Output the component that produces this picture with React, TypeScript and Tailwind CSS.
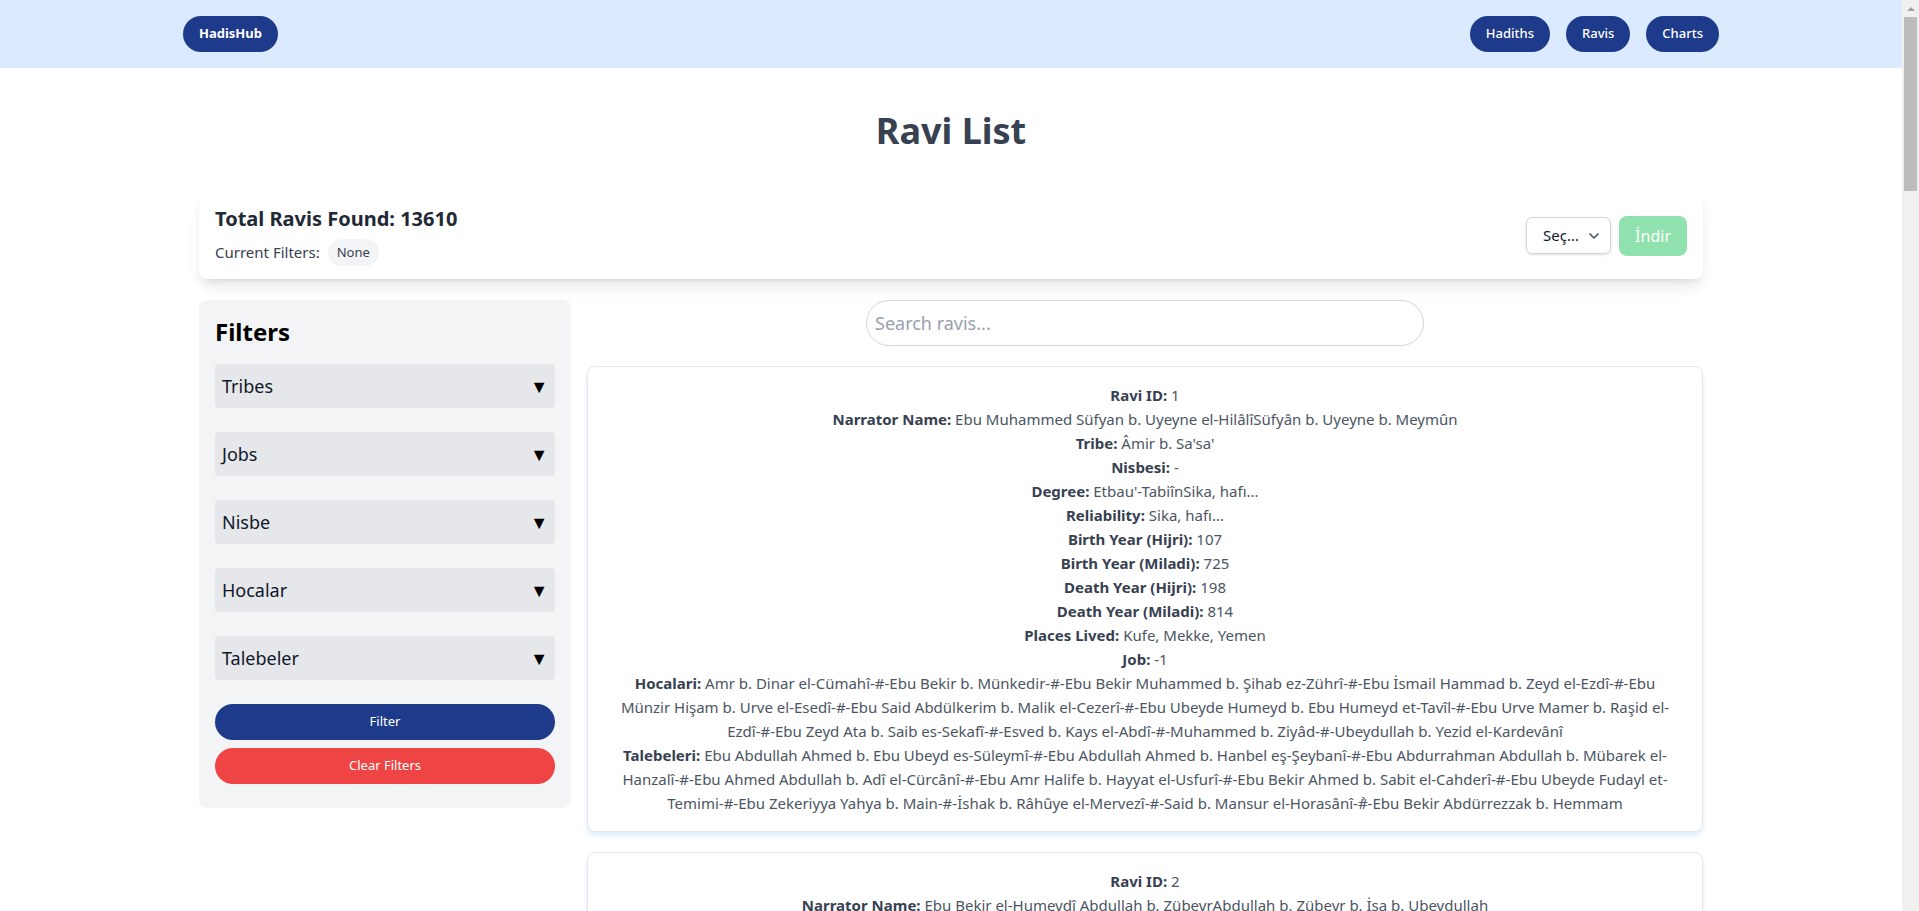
import React from 'react';
import { ChevronDown } from 'lucide-react';

interface Ravi {
  id: number;
  name: string;
  tribe: string;
  nisbesi: string;
  degree: string;
  reliability: string;
  birthHijri: string;
  birthMiladi: string;
  deathHijri: string;
  deathMiladi: string;
  places: string;
  job: string;
  hocalari: string;
  talebeleri: string;
}

const ravis: Ravi[] = [
  {
    id: 1,
    name: 'Ebu Muhammed Süfyan b. Uyeyne el-HilâlîSüfyân b. Uyeyne b. Meymûn',
    tribe: "Âmir b. Sa'sa'",
    nisbesi: '-',
    degree: "Etbau'-TabiînSika, hafı...",
    reliability: 'Sika, hafı...',
    birthHijri: '107',
    birthMiladi: '725',
    deathHijri: '198',
    deathMiladi: '814',
    places: 'Kufe, Mekke, Yemen',
    job: '-1',
    hocalari:
      'Amr b. Dinar el-Cümahî-#-Ebu Bekir b. Münkedir-#-Ebu Bekir Muhammed b. Şihab ez-Zührî-#-Ebu İsmail Hammad b. Zeyd el-Ezdî-#-Ebu Münzir Hişam b. Urve el-Esedî-#-Ebu Said Abdülkerim b. Malik el-Cezerî-#-Ebu Ubeyde Humeyd b. Ebu Humeyd et-Tavîl-#-Ebu Urve Mamer b. Raşid el-Ezdî-#-Ebu Zeyd Ata b. Saib es-Sekafî-#-Esved b. Kays el-Abdî-#-Muhammed b. Ziyâd-#-Ubeydullah b. Yezid el-Kardevânî',
    talebeleri:
      'Ebu Abdullah Ahmed b. Ebu Ubeyd es-Süleymî-#-Ebu Abdullah Ahmed b. Hanbel eş-Şeybanî-#-Ebu Abdurrahman Abdullah b. Mübarek el-Hanzalî-#-Ebu Ahmed Abdullah b. Adî el-Cürcânî-#-Ebu Amr Halife b. Hayyat el-Usfurî-#-Ebu Bekir Ahmed b. Sabit el-Cahderî-#-Ebu Ubeyde Fudayl et-Temimi-#-Ebu Zekeriyya Yahya b. Main-#-İshak b. Râhûye el-Mervezî-#-Said b. Mansur el-Horasânî-#̉-Ebu Bekir Abdürrezzak b. Hemmam',
  },
  {
    id: 2,
    name: 'Ebu Bekir el-Humeydî Abdullah b. ZübeyrAbdullah b. Zübeyr b. İsa b. Ubeydullah',
    tribe: 'Esed b. Abdüluzzâ',
    nisbesi: 'el-Humeydî',
    degree: 'Etbau Etbai-t-TabiînSika, hafız...',
    reliability: 'Sika, hafız...',
    birthHijri: '-',
    birthMiladi: '-',
    deathHijri: '219',
    deathMiladi: '834',
    places: 'Mekke',
    job: '-1',
    hocalari: 'Ebu Muhammed Süfyan b. Uyeyne el-Hilâlî-#-Ebu Abdullah Muhammed b. İdris eş-Şafiî',
    talebeleri: 'Ebu Abdullah Muhammed b. İsmail el-Buhârî-#-Ebu Hatim Muhammed b. İdris er-Râzî',
  },
];

const filterGroups = ['Tribes', 'Jobs', 'Nisbe', 'Hocalar', 'Talebeler'];

function Field({ label, value }: { label: string; value: string }) {
  return (
    <p>
      <span className="font-bold text-[#374151]">{label}:</span> {value}
    </p>
  );
}

function RaviCard({ ravi }: { ravi: Ravi }) {
  return (
    <div className="bg-white border border-gray-200 rounded-lg shadow-md shadow-blue-100 px-8 py-4 text-center text-[15px] leading-6 text-[#4b5563]">
      <Field label="Ravi ID" value={String(ravi.id)} />
      <Field label="Narrator Name" value={ravi.name} />
      <Field label="Tribe" value={ravi.tribe} />
      <Field label="Nisbesi" value={ravi.nisbesi} />
      <Field label="Degree" value={ravi.degree} />
      <Field label="Reliability" value={ravi.reliability} />
      <Field label="Birth Year (Hijri)" value={ravi.birthHijri} />
      <Field label="Birth Year (Miladi)" value={ravi.birthMiladi} />
      <Field label="Death Year (Hijri)" value={ravi.deathHijri} />
      <Field label="Death Year (Miladi)" value={ravi.deathMiladi} />
      <Field label="Places Lived" value={ravi.places} />
      <Field label="Job" value={ravi.job} />
      <Field label="Hocalari" value={ravi.hocalari} />
      <Field label="Talebeleri" value={ravi.talebeleri} />
    </div>
  );
}

export default function App() {
  const [search, setSearch] = React.useState('');

  return (
    <div className="min-h-screen bg-white pr-[17px] font-['Noto_Sans',sans-serif]">
      <header className="bg-[#dbeafe]">
        <nav className="mx-auto max-w-[1536px] h-[68px] flex items-center justify-between">
          <a className="h-9 px-4 flex items-center rounded-full bg-[#1e3a8a] text-white text-[13px] font-bold">
            HadisHub
          </a>
          <div className="flex items-center gap-4">
            {['Hadiths', 'Ravis', 'Charts'].map((item) => (
              <a
                key={item}
                className="h-9 px-4 flex items-center rounded-full bg-[#1e3a8a] text-white text-[13px] font-medium"
              >
                {item}
              </a>
            ))}
          </div>
        </nav>
      </header>

      <main className="mx-auto max-w-[1536px] px-4">
        <h1 className="text-4xl font-bold text-[#374151] text-center pt-[43px] pb-[39px] leading-[40px]">
          Ravi List
        </h1>

        <div className="bg-white rounded-lg shadow-lg px-4 pt-[15px] pb-[13px] flex items-center justify-between mb-[21px]">
          <div>
            <h2 className="text-xl font-bold text-[#1f2937] leading-7">Total Ravis Found: 13610</h2>
            <div className="flex items-center gap-2 mt-[6px] text-[15px] text-[#374151]">
              <span>Current Filters:</span>
              <span className="h-[27px] px-[9px] flex items-center rounded-full bg-[#f3f4f6] text-[13px] text-[#374151]">
                None
              </span>
            </div>
          </div>
          <div className="flex items-center gap-2">
            <div className="h-[37px] w-[85px] border border-gray-300 rounded-md shadow-sm flex items-center justify-between pl-4 pr-2 text-[15px] text-gray-900">
              <span>Seç...</span>
              <ChevronDown className="w-4 h-4 text-gray-600" strokeWidth={2.5} />
            </div>
            <button className="h-10 px-4 rounded-lg bg-[#22c55e] opacity-50 text-white text-base">
              İndir
            </button>
          </div>
        </div>

        <div className="flex gap-4 items-start pb-10">
          <aside className="w-[372px] shrink-0 bg-[#f3f4f6] rounded-lg px-4 pt-4 pb-6">
            <h3 className="text-2xl font-bold text-black leading-8 mb-4">Filters</h3>
            {filterGroups.map((group) => (
              <div
                key={group}
                className="h-11 mb-6 bg-[#e5e7eb] rounded flex items-center justify-between px-[7px] text-lg text-gray-900"
              >
                <span>{group}</span>
                <span className="text-black text-lg">▼</span>
              </div>
            ))}
            <button className="w-full h-9 rounded-full bg-[#1e3a8a] text-white text-[13px]">Filter</button>
            <button className="w-full h-9 mt-2 rounded-full bg-[#ef4444] text-white text-[13px]">
              Clear Filters
            </button>
          </aside>

          <section className="flex-1 min-w-0">
            <input
              value={search}
              onChange={(e) => setSearch(e.target.value)}
              placeholder="Search ravis..."
              className="block mx-auto w-1/2 h-[46px] mb-5 px-2 rounded-full border border-gray-300 text-lg text-gray-700 placeholder-gray-400 outline-none"
            />
            <div className="flex flex-col gap-5">
              {ravis.map((r) => (
                <RaviCard key={r.id} ravi={r} />
              ))}
            </div>
          </section>
        </div>
      </main>

      {/* scrollbar as it shows in the browser */}
      <div className="fixed top-0 right-0 h-screen w-[17px] bg-[#f0f0f0] flex flex-col items-center">
        <div className="h-[17px] flex items-center justify-center">
          <div className="w-0 h-0 border-l-[4px] border-r-[4px] border-b-[4px] border-l-transparent border-r-transparent border-b-[#a3a3a3]" />
        </div>
        <div className="w-[13px] h-[174px] bg-[#bcbcbc]" />
      </div>
    </div>
  );
}
